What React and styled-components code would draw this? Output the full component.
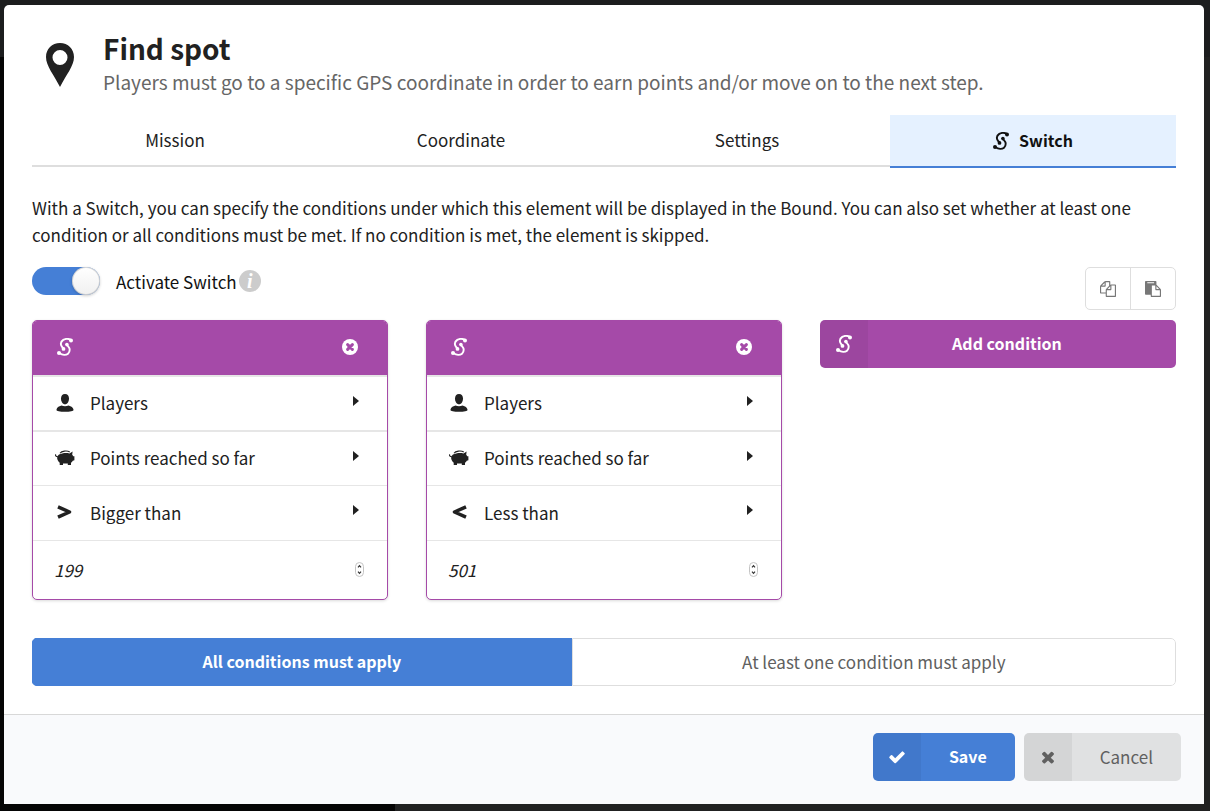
import React, { useState } from 'react';
import styled, { createGlobalStyle, css } from 'styled-components';

const FA_CHECK = 'M1671 566q0 40-28 68l-724 724-136 136q-28 28-68 28t-68-28l-136-136-362-362q-28-28-28-68t28-68l136-136q28-28 68-28t68 28l294 295 656-657q28-28 68-28t68 28l136 136q28 28 28 68z';
const FA_TIMES = 'M1490 1322q0 40-28 68l-136 136q-28 28-68 28t-68-28l-294-294-294 294q-28 28-68 28t-68-28l-136-136q-28-28-28-68t28-68l294-294-294-294q-28-28-28-68t28-68l136-136q28-28 68-28t68 28l294 294 294-294q28-28 68-28t68 28l136 136q28 28 28 68t-28 68l-294 294 294 294q28 28 28 68z';
const FA_COPY = 'M1696 384q40 0 68 28t28 68v1216q0 40-28 68t-68 28h-960q-40 0-68-28t-28-68v-288h-544q-40 0-68-28t-28-68v-672q0-40 20-88t48-76l408-408q28-28 76-48t88-20h416q40 0 68 28t28 68v328q68-40 128-40h416zm-544 213l-299 299h299v-299zm-640-384l-299 299h299v-299zm196 647l316-316v-416h-384v416q0 40-28 68t-68 28h-416v640h512v-256q0-40 20-88t48-76zm956 804v-1152h-384v416q0 40-28 68t-68 28h-416v640h896z';
const FA_PASTE = 'M768 1664h896v-640h-416q-40 0-68-28t-28-68v-416h-384v1152zm256-1440v-64q0-13-9.5-22.5t-22.5-9.5h-704q-13 0-22.5 9.5t-9.5 22.5v64q0 13 9.5 22.5t22.5 9.5h704q13 0 22.5-9.5t9.5-22.5zm256 672h299l-299-299v299zm512 128v672q0 40-28 68t-68 28h-960q-40 0-68-28t-28-68v-160h-544q-40 0-68-28t-28-68v-1344q0-40 28-68t68-28h1088q40 0 68 28t28 68v328q21 13 36 28l408 408q28 28 48 76t20 88z';

const FaIcon = ({ d, size = 16 }) => (
  <svg width={size} height={size} viewBox="0 0 1792 1792" fill="currentColor" aria-hidden="true">
    <path d={d} />
  </svg>
);

const PinIcon = () => (
  <svg width="28" height="44" viewBox="0 0 28 44" fill="#212121" fillRule="evenodd" aria-hidden="true">
    <path d="M14 0C6 0 0 6 0 14c0 9 8 18 14 30 6-12 14-21 14-30C28 6 22 0 14 0zm0 7a7.500 7.500 0 1 1 0 15 7.500 7.500 0 0 1 0-15z" />
  </svg>
);

const SwitchIcon = () => (
  <svg width="16" height="18" viewBox="0 0 16 18" fill="none" stroke="currentColor" strokeWidth="1.900" strokeLinecap="round" aria-hidden="true">
    <path d="M14 1.900C11.500.7 8.300.7 6.300 1.900 3.800 3.500 3.600 6 4.300 7.700c.5 1.300 1.500 2 2.300 3.100" />
    <path d="M9.800 6.700c.8 1.600 2.900 2.500 2.900 5.100 0 3.400-2.600 5.200-5.500 5.100-2-.1-3.500-.9-5.100-1.900" />
    <g fill="currentColor" stroke="none">
      <circle cx="14" cy="2.400" r="2" />
      <circle cx="9.900" cy="6.600" r="1.800" />
      <circle cx="6.500" cy="10.900" r="1.900" />
      <circle cx="2" cy="14.900" r="2" />
    </g>
  </svg>
);

const RemoveIcon = () => (
  <svg width="16" height="16" viewBox="0 0 16 16" aria-hidden="true">
    <circle cx="8" cy="8" r="8" fill="#fff" />
    <path d="M5.600 5.600l4.800 4.800M10.400 5.600l-4.800 4.800" stroke="#a54aa8" strokeWidth="3" strokeLinecap="round" />
  </svg>
);

const PlayerIcon = () => (
  <svg width="18" height="18" viewBox="0 0 18 18" fill="currentColor" aria-hidden="true">
    <path d="M9 0c2.600 0 4 1.900 4 4.400 0 2.900-1.500 5.800-4 5.800S5 7.300 5 4.400C5 1.900 6.400 0 9 0z" />
    <path d="M5.500 11.400c2 1 5 1 7 0 2.800.6 4.900 2.200 5.100 4.500 0 .9-3.600 1.900-8.600 1.900S.4 16.800.4 15.900c.2-2.300 2.300-3.900 5.100-4.500z" />
  </svg>
);

const PiggyIcon = () => (
  <svg width="20" height="16" viewBox="0 0 20 16" fill="currentColor" aria-hidden="true">
    <path d="M5 3.200C6.500 1 12 .2 14.800 2" fill="none" stroke="currentColor" strokeWidth="1.100" />
    <path d="M.6 4.400c-.4 1.400.7 2.300 2.200 2.200" fill="none" stroke="currentColor" strokeWidth="1.200" />
    <path d="M4 4.500C7 3 11 2.500 14.500 3.400L17.600 1.500l-.4 3.300c.5.600.8 1 1 1.400h1.200v4l-1.600.5c-.5.900-1.100 1.500-1.800 2V15h-3.200V13.600H8V15H4.700v-2.300C2.900 11.200 1.900 9.200 2.200 7.300 2.400 6.200 3 5.200 4 4.500z" />
  </svg>
);

const CompareIcon = ({ less }) => (
  <svg width="16" height="16" viewBox="0 0 16 16" fill="none" stroke="currentColor" strokeWidth="3.500" aria-hidden="true">
    <path d={less ? 'M15 2.800L3.500 8l11.500 5.200' : 'M1 2.800L12.500 8 1 13.200'} strokeLinejoin="round" />
  </svg>
);

const CaretIcon = () => (
  <svg width="6" height="10" viewBox="0 0 6 10" fill="currentColor" aria-hidden="true">
    <path d="M0 0l6 5-6 5z" />
  </svg>
);

const StepperIcon = () => (
  <svg width="9" height="15" viewBox="0 0 9 15" fill="none" aria-hidden="true">
    <rect x=".5" y=".5" width="8" height="14" rx="4" fill="#fff" stroke="#c4c4c4" />
    <path d="M3 5.400l1.500-1.700L6 5.400M3 9.600l1.500 1.700L6 9.600" stroke="#333" strokeWidth="1.200" />
  </svg>
);

const TABS = ['Mission', 'Coordinate', 'Settings', 'Switch'];

const CONDITIONS = [
  { id: 'bigger', less: false, operator: 'Bigger than', value: 199 },
  { id: 'less', less: true, operator: 'Less than', value: 501 }
];

const ConditionCard = ({ condition }) => {
  const [value, setValue] = useState(condition.value);

  return (
    <Card>
      <CardHeader>
        <SwitchIcon />
        <RemoveButton type="button" aria-label="Remove condition">
          <RemoveIcon />
        </RemoveButton>
      </CardHeader>
      <CardRow type="button" $thick>
        <RowIcon><PlayerIcon /></RowIcon>
        <RowLabel>Players</RowLabel>
        <Caret><CaretIcon /></Caret>
      </CardRow>
      <CardRow type="button" $thick>
        <RowIcon><PiggyIcon /></RowIcon>
        <RowLabel>Points reached so far</RowLabel>
        <Caret><CaretIcon /></Caret>
      </CardRow>
      <CardRow type="button">
        <RowIcon><CompareIcon less={condition.less} /></RowIcon>
        <RowLabel>{condition.operator}</RowLabel>
        <Caret><CaretIcon /></Caret>
      </CardRow>
      <ValueRow>
        <ValueInput
          type="number"
          aria-label={condition.operator}
          value={value}
          onChange={e => setValue(e.target.value)}
        />
        <StepperIcon />
      </ValueRow>
    </Card>
  );
};

const App = () => {
  const [tab, setTab] = useState('Switch');
  const [active, setActive] = useState(true);
  const [mode, setMode] = useState('all');

  return (
    <Page>
      <GlobalStyle />
      <Modal role="dialog" aria-labelledby="dialog-title">
        <Content>
          <Header>
            <PinBox><PinIcon /></PinBox>
            <div>
              <Title id="dialog-title">Find spot</Title>
              <Subtitle>
                Players must go to a specific GPS coordinate in order to earn points and/or move on to the next step.
              </Subtitle>
            </div>
          </Header>

          <TabList role="tablist">
            {TABS.map(name => (
              <Tab
                key={name}
                type="button"
                role="tab"
                aria-selected={tab === name}
                $active={tab === name}
                onClick={() => setTab(name)}
              >
                {name === 'Switch' && <SwitchIcon />}
                {name}
              </Tab>
            ))}
          </TabList>

          <Description>
            With a Switch, you can specify the conditions under which this element will be displayed in the Bound. You
            can also set whether at least one condition or all conditions must be met. If no condition is met, the
            element is skipped.
          </Description>

          <Toolbar>
            <ToggleField>
              <Toggle
                id="activate-switch"
                type="checkbox"
                role="switch"
                checked={active}
                onChange={e => setActive(e.target.checked)}
              />
              <ToggleLabel htmlFor="activate-switch">Activate Switch</ToggleLabel>
              <InfoBadge>i</InfoBadge>
            </ToggleField>
            <IconGroup>
              <IconButton type="button" aria-label="Copy conditions"><FaIcon d={FA_COPY} /></IconButton>
              <IconButton type="button" aria-label="Paste conditions"><FaIcon d={FA_PASTE} /></IconButton>
            </IconGroup>
          </Toolbar>

          <Conditions>
            {CONDITIONS.map(condition => (
              <ConditionCard key={condition.id} condition={condition} />
            ))}
            <LabeledButton type="button" $variant="purple">
              <ButtonIcon><SwitchIcon /></ButtonIcon>
              <ButtonText $fluid>Add condition</ButtonText>
            </LabeledButton>
          </Conditions>

          <ModeGroup>
            <ModeButton type="button" $active={mode === 'all'} aria-pressed={mode === 'all'} onClick={() => setMode('all')}>
              All conditions must apply
            </ModeButton>
            <ModeButton type="button" $active={mode === 'any'} aria-pressed={mode === 'any'} onClick={() => setMode('any')}>
              At least one condition must apply
            </ModeButton>
          </ModeGroup>
        </Content>

        <Footer>
          <LabeledButton type="button" $variant="blue">
            <ButtonIcon><FaIcon d={FA_CHECK} size={18} /></ButtonIcon>
            <ButtonText>Save</ButtonText>
          </LabeledButton>
          <LabeledButton type="button" $variant="grey">
            <ButtonIcon><FaIcon d={FA_TIMES} size={18} /></ButtonIcon>
            <ButtonText>Cancel</ButtonText>
          </LabeledButton>
        </Footer>
      </Modal>
    </Page>
  );
};

export default App;

const GlobalStyle = createGlobalStyle`
  * {
    box-sizing: border-box;
  }

  body {
    margin: 0;
    background: #212121;
    color: #212121;
    font-family: "Noto Sans CJK JP", "Noto Sans", sans-serif;
    font-size: 17px;
    line-height: 27px;
  }

  button, input {
    font: inherit;
    color: inherit;
  }

  button {
    cursor: pointer;
  }

  svg {
    display: block;
    flex: none;
  }
`;

const Page = styled.main`
  min-height: 100vh;
  padding: 5px 6px 7px 4px;
  background: linear-gradient(90deg, #050505 395px, #212121 395px) bottom / 100% 93% no-repeat, #1c1d1e;
`;

const Modal = styled.div`
  border-radius: 5px 5px 0 0;
  background: #fff;
  overflow: hidden;
`;

const Content = styled.div`
  padding: 28px;
`;

const Header = styled.header`
  display: flex;
  min-height: 64px;
  margin-bottom: 18px;
`;

const PinBox = styled.div`
  display: flex;
  align-items: center;
  justify-content: center;
  width: 56px;
  margin-right: 15px;
`;

const Title = styled.h1`
  margin: 0 0 5px;
  font-size: 28px;
  line-height: 30px;
  font-weight: 700;
`;

const Subtitle = styled.p`
  margin: 0;
  color: #666;
  font-size: 19px;
  line-height: 28px;
`;

const TabList = styled.div`
  display: flex;
  border-bottom: 2px solid #dedede;
`;

const Tab = styled.button`
  display: flex;
  flex: 1;
  align-items: center;
  justify-content: center;
  gap: 10px;
  height: 53px;
  margin-bottom: -3px;
  padding: 0 0 4px;
  border: 0;
  background: none;

  ${props => props.$active && css`
    padding-bottom: 0;
    border-bottom: 2px solid #457fd6;
    background: #e5f1ff;
    color: #111;
    font-size: 16px;
    font-weight: 700;
  `}
`;

const Description = styled.p`
  margin: 27px 0 19px;
`;

const Toolbar = styled.div`
  display: flex;
  align-items: flex-start;
  justify-content: space-between;
  margin-bottom: 10px;
`;

const ToggleField = styled.div`
  display: flex;
  align-items: center;
`;

const Toggle = styled.input`
  appearance: none;
  display: flex;
  justify-content: ${props => (props.checked ? 'flex-end' : 'flex-start')};
  width: 68px;
  height: 28px;
  margin: 0 16px 0 0;
  border-radius: 14px;
  background: ${props => (props.checked ? '#457fd6' : '#ddd')};

  &::before {
    content: '';
    width: 28px;
    height: 28px;
    border-radius: 50%;
    background: linear-gradient(#fff, #f0f0f0);
    box-shadow: 0 1px 3px rgba(0, 0, 0, 0.2), inset 0 0 0 1px rgba(0, 0, 0, 0.15);
  }
`;

const ToggleLabel = styled.label`
  margin-right: 2px;
  color: #111;
`;

const InfoBadge = styled.span`
  width: 22px;
  height: 22px;
  border-radius: 50%;
  background: #ccc;
  color: #fff;
  font: italic bold 20px/22px "Liberation Serif", serif;
  text-align: center;
`;

const IconGroup = styled.div`
  display: flex;
  border: 1px solid #dedede;
  border-radius: 5px;
`;

const IconButton = styled.button`
  display: flex;
  align-items: center;
  justify-content: center;
  width: 44px;
  height: 41px;
  padding: 0;
  border: 0;
  background: none;
  color: #777;

  & + & {
    width: 45px;
    border-left: 1px solid #dedede;
  }
`;

const Conditions = styled.div`
  display: grid;
  grid-template-columns: repeat(3, 1fr);
  gap: 38px;
  align-items: start;
  margin-bottom: 38px;
`;

const Card = styled.section`
  border: 1px solid #a54aa8;
  border-radius: 5px;
  background: #fff;
  box-shadow: 0 1px 3px rgba(0, 0, 0, 0.15);
  overflow: hidden;
`;

const CardHeader = styled.div`
  display: flex;
  align-items: center;
  justify-content: space-between;
  height: 54px;
  padding: 0 29px 2px 24px;
  background: #a54aa8;
  color: #fff;
`;

const RemoveButton = styled.button`
  padding: 0;
  border: 0;
  background: none;
`;

const CardRow = styled.button`
  display: flex;
  align-items: center;
  width: 100%;
  height: 55px;
  padding: 0 28px 2px 22px;
  border: 0;
  border-top: ${props => (props.$thick ? 2 : 1)}px solid #e6e6e6;
  background: none;
  text-align: left;
`;

const RowIcon = styled.span`
  display: flex;
  justify-content: center;
  width: 20px;
  margin-right: 15px;
`;

const RowLabel = styled.span`
  flex: 1;
`;

const Caret = styled.span`
  padding-bottom: 4px;
`;

const ValueRow = styled.div`
  display: flex;
  align-items: center;
  height: 59px;
  padding: 0 23px 2px 21px;
  border-top: 1px solid #e6e6e6;
`;

const ValueInput = styled.input`
  flex: 1;
  min-width: 0;
  padding: 0;
  border: 0;
  outline: 0;
  background: none;
  font-style: italic;
  appearance: textfield;

  &::-webkit-inner-spin-button {
    display: none;
  }
`;

const variants = {
  purple: css`
    background: #a54aa8;
    color: #fff;
    font-size: 16px;
    font-weight: 700;
  `,
  blue: css`
    background: #457fd6;
    color: #fff;
    font-size: 16px;
    font-weight: 700;
  `,
  grey: css`
    background: #e0e1e2;
    color: #606060;
  `
};

const LabeledButton = styled.button`
  display: flex;
  height: 48px;
  padding: 0;
  border: 0;
  border-radius: 5px;
  overflow: hidden;
  ${props => variants[props.$variant]}
`;

const ButtonIcon = styled.span`
  display: flex;
  align-items: center;
  justify-content: center;
  width: 48px;
  height: 48px;
  background: rgba(0, 0, 0, 0.05);
`;

const ButtonText = styled.span`
  flex: 1;
  padding: ${props => (props.$fluid ? '0 42px 0 12px' : '0 28px')};
  line-height: 47px;
`;

const ModeGroup = styled.div`
  display: flex;
  border-radius: 5px;
  overflow: hidden;
`;

const ModeButton = styled.button`
  flex: 1 1 auto;
  height: 48px;
  padding: 0 0 2px;
  border: 1px solid #dedede;
  border-radius: 0 5px 5px 0;
  background: #fff;
  color: #606060;

  ${props => props.$active && css`
    border-color: #457fd6;
    border-radius: 0;
    background: #457fd6;
    color: #fff;
    font-size: 16px;
    font-weight: 700;
  `}
`;

const Footer = styled.footer`
  display: flex;
  justify-content: flex-end;
  gap: 9px;
  padding: 18px 23px 23px;
  border-top: 1px solid #d8d8d8;
  background: #f9fafc;
`;
